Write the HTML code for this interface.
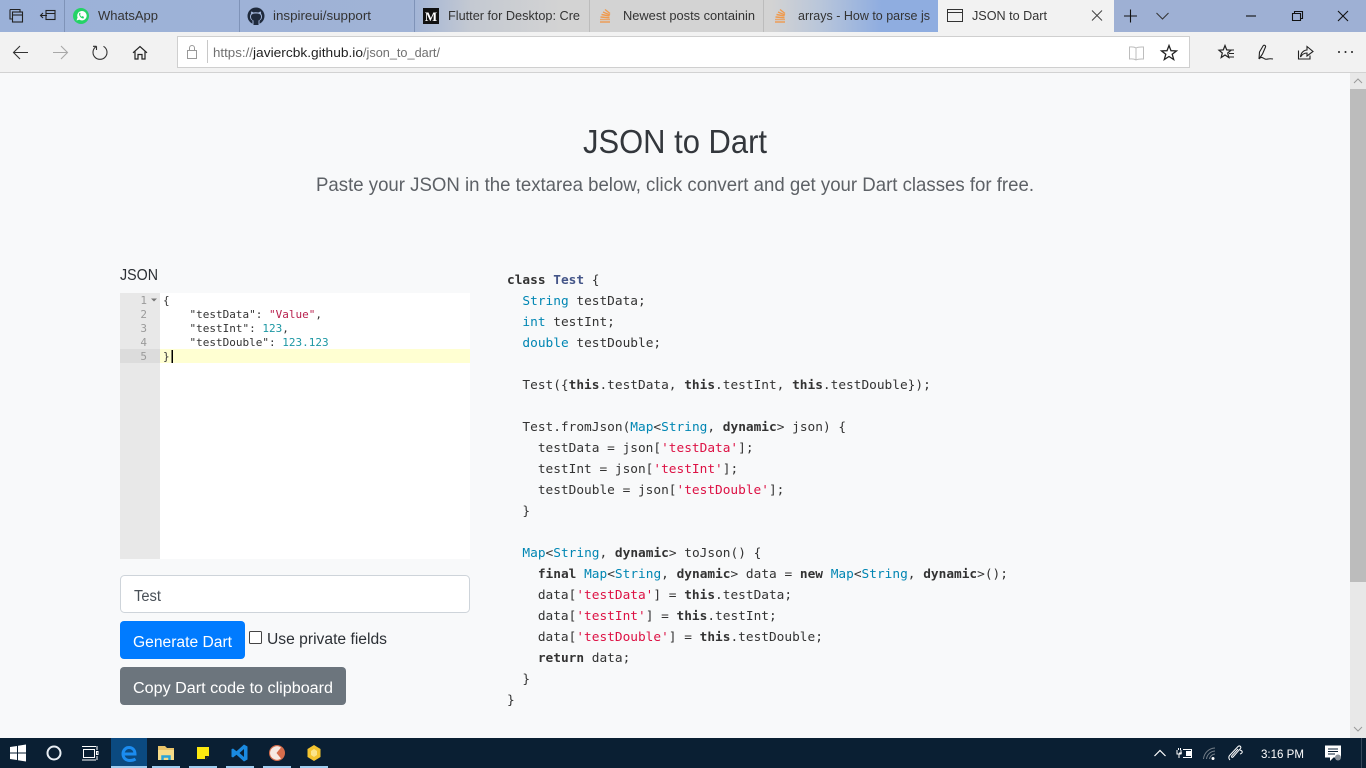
<!DOCTYPE html>
<html lang="en"><head><meta charset="utf-8"><title>JSON to Dart</title>
<style>
html,body{margin:0;padding:0;width:1366px;height:768px;overflow:hidden;background:#f8f9fa}
svg{display:block}
text{font-family:"Liberation Sans",sans-serif;white-space:pre}
.m{font-family:"DejaVu Sans Mono",monospace;font-size:12.8px;fill:#333}
.e{font-family:"DejaVu Sans Mono",monospace;font-size:11px;fill:#333}
.k{font-weight:bold}.t{fill:#0086b3}.s{fill:#d14}.c{fill:#445588;font-weight:bold}
.g{font-family:"DejaVu Sans Mono",monospace;font-size:11px;fill:#9a9a9a;text-anchor:end}
.tab{font-size:13px;fill:#333}
</style></head><body>
<svg width="1366" height="768" viewBox="0 0 1366 768" xmlns="http://www.w3.org/2000/svg">
<defs><linearGradient id="bar" x1="0" x2="1366" y1="0" y2="0" gradientUnits="userSpaceOnUse">
<stop offset="0" stop-color="#9bb1d8"/><stop offset=".3" stop-color="#a0b3d6"/><stop offset=".345" stop-color="#c4c9d2"/><stop offset=".41" stop-color="#d3d3d3"/><stop offset=".565" stop-color="#d3d3d3"/><stop offset=".6" stop-color="#b9c6da"/><stop offset=".645" stop-color="#8fade0"/><stop offset=".69" stop-color="#8fade0"/><stop offset=".82" stop-color="#9eb0d4"/><stop offset="1" stop-color="#9eb0d4"/></linearGradient></defs>
<rect width="1366" height="768" fill="#f8f9fa"/>
<!-- tab strip -->
<rect width="1366" height="32" fill="url(#bar)"/>
<g stroke="#7f93b8" stroke-width="1"><path d="M64.5 0V32M239.5 0V32M414.5 0V32"/></g>
<path d="M589.5 0V32M763.5 0V32" stroke="#bcbcbc"/>
<rect x="938" width="176" height="33" fill="#f2f2f2"/>
<!-- toolbar -->
<rect y="32" width="1366" height="40" fill="#f2f2f2"/>
<rect y="72" width="1366" height="1" fill="#d2d2d2"/>
<rect x="177.5" y="36.5" width="1012" height="31" fill="#fff" stroke="#cfcfcf"/>
<!-- left tab icons -->
<g fill="none" stroke="#222" stroke-width="1.1">
<path d="M10 9.5H20V12M10 9.5V19H12.500"/><rect x="12.500" y="12" width="10" height="10" fill="#9bb1d8"/><path d="M12.500 15H22.500"/>
<rect x="46" y="10.500" width="9" height="9"/><path d="M46 13.500H55M40.500 15.500H47M43 13L40.500 15.500L43 18"/>
</g>
<circle cx="81" cy="16" r="8" fill="#25d366"/><path d="M76.500 20.500L77.600 17.500A4.700 4.700 0 1 1 79.300 19.600Z" fill="#fff"/><path d="M79 13.500C79 16 81 18.500 83.500 18.500L84 17L82.500 16L81.800 16.800C81 16.300 80.300 15.500 80 14.800L80.600 14L80 12.600Z" fill="#25d366"/>
<circle cx="256" cy="16" r="8.500" fill="#1f2a3c"/><path d="M252.500 24V20.500C251 20 250 18.800 250 16.500C250 15.300 250.400 14.400 251 13.700C250.800 13 250.900 12.200 251.200 11.500C252 11.500 252.800 12 253.500 12.500C255 12.100 257 12.100 258.500 12.500C259.200 12 260 11.500 260.800 11.500C261.100 12.200 261.200 13 261 13.700C261.600 14.400 262 15.300 262 16.500C262 18.800 261 20 259.500 20.500V24Z" fill="#a0b3d6"/><path d="M253.500 25V20.500C252 20 251 18.800 251 16.500C251 14.300 253 13.500 256 13.500C259 13.500 261 14.300 261 16.500C261 18.800 260 20 258.500 20.500V25Z" fill="#1f2a3c"/>
<rect x="423" y="8" width="16" height="16" fill="#111"/>
<text x="431" y="21" style="font-family:'Liberation Serif',serif;font-weight:bold;font-size:13px;text-anchor:middle" fill="#fff">M</text>
<g fill="none" stroke="#ef9a4e" stroke-width="1.400">
<path d="M600 22H610"/><path d="M600 19.500L610 19.500" stroke="#e8a66b"/><path d="M600.500 17L609.500 17.800"/><path d="M601.500 14.500L609.500 16"/><path d="M603 12L610 15"/><path d="M605 9.500L610 13.500"/></g>
<g fill="none" stroke="#ef9a4e" stroke-width="1.400">
<path d="M775 22H785"/><path d="M775 19.500L785 19.500" stroke="#e8a66b"/><path d="M775.500 17L784.500 17.800"/><path d="M776.500 14.500L784.500 16"/><path d="M778 12L785 15"/><path d="M780 9.500L785 13.500"/></g>
<path d="M947.500 9.500H962.500V21.500H947.500ZM947.500 12.500H962.500" fill="none" stroke="#333" stroke-width="1"/>
<!-- tab text -->
<text class="tab" x="98" y="20" textLength="60" lengthAdjust="spacingAndGlyphs">WhatsApp</text>
<text class="tab" x="273" y="20" textLength="98" lengthAdjust="spacingAndGlyphs">inspireui/support</text>
<text class="tab" x="448" y="20" textLength="132" lengthAdjust="spacingAndGlyphs">Flutter for Desktop: Cre</text>
<text class="tab" x="623" y="20" textLength="132" lengthAdjust="spacingAndGlyphs">Newest posts containin</text>
<text class="tab" x="798" y="20" textLength="132" lengthAdjust="spacingAndGlyphs">arrays - How to parse js</text>
<text class="tab" x="972" y="20" textLength="75" lengthAdjust="spacingAndGlyphs">JSON to Dart</text>
<path d="M1092 10.500L1102 20.500M1102 10.500L1092 20.500" stroke="#444" stroke-width="1" fill="none"/>
<path d="M1130.500 9.500V22.500M1124 16H1137" stroke="#111" stroke-width="1.100" fill="none"/>
<path d="M1156.500 13L1162.500 19L1168.500 13" stroke="#333" stroke-width="1" fill="none"/>
<path d="M1246 16H1256" stroke="#111" stroke-width="1.100"/>
<path d="M1292.500 13.500H1300.500V20.500H1292.500ZM1294.500 13.500V11.500H1302.500V18.500H1300.500" fill="none" stroke="#111" stroke-width="1.100"/>
<path d="M1338 11L1348 21M1348 11L1338 21" stroke="#111" stroke-width="1.100" fill="none"/>
<!-- nav icons -->
<path d="M28 52.500H13.500M20 46L13.500 52.500L20 59" fill="none" stroke="#333" stroke-width="1.100"/>
<path d="M53 52.500H67.500M61 46L67.500 52.500L61 59" fill="none" stroke="#a8a8a8" stroke-width="1.100"/>
<path d="M103.500 46.300A7 7 0 1 1 96.500 46.300M96.500 46.300V50M96.500 46.300H93" fill="none" stroke="#333" stroke-width="1.100"/>
<path d="M133 52.800L140 46.500L147 52.800M135 51.500V59H138V54.500H142V59H145V51.500" fill="none" stroke="#222" stroke-width="1.200"/>
<path d="M187.500 50.500H196.500V58.500H187.500ZM189.500 50.500V48A2.500 2.500 0 0 1 194.500 48V50.500" fill="none" stroke="#999" stroke-width="1"/>
<path d="M207.500 40V63" stroke="#c8c8c8"/>
<!-- url -->
<text x="213" y="57" font-size="13" fill="#707070" textLength="40" lengthAdjust="spacingAndGlyphs">https://</text>
<text x="253" y="57" font-size="13" fill="#1f1f1f" textLength="110" lengthAdjust="spacingAndGlyphs">javiercbk.github.io</text>
<text x="363" y="57" font-size="13" fill="#707070" textLength="77" lengthAdjust="spacingAndGlyphs">/json_to_dart/</text>
<path d="M1136 48C1134 46.800 1132 46.800 1129.500 47V59C1132 58.800 1134 58.800 1136 60C1138 58.800 1140 58.800 1143.500 59V47C1140 46.800 1138 46.800 1136 48ZM1136 48V60" fill="none" stroke="#bdbdbd" stroke-width="1"/>
<path d="M1169 45.500L1171 50.700L1176.500 50.900L1172.200 54.300L1173.700 59.500L1169 56.500L1164.300 59.500L1165.800 54.300L1161.500 50.900L1167 50.700Z" fill="none" stroke="#222" stroke-width="1.300"/>
<path d="M1225 45.500L1226.700 49.900L1231 50.200L1227.700 53L1228.800 57.500L1225 55L1221.200 57.500L1222.300 53L1219 50.200L1223.300 49.900Z" fill="none" stroke="#222" stroke-width="1.200"/><path d="M1228 50H1234M1229 53.500H1234M1229 57H1234" stroke="#222" stroke-width="1"/>
<path d="M1259 59L1259.500 52L1263 46C1264 44.500 1266 45.500 1265.500 47L1262.500 54L1259 59C1261 56 1263 58 1265 59C1267 60 1268 58 1273 59" fill="none" stroke="#222" stroke-width="1.100"/>
<path d="M1298.500 50.500V59H1310V55.500M1300.500 57C1301 52 1304.500 50 1307 50V46.500L1313 51.500L1307 56V53C1304.500 53 1302 54.500 1300.500 57Z" fill="none" stroke="#222" stroke-width="1.100"/>
<g fill="#222"><circle cx="1339" cy="52" r="1"/><circle cx="1345.500" cy="52" r="1"/><circle cx="1352" cy="52" r="1"/></g>
<!-- heading -->
<text x="583" y="153" font-size="33" fill="#33373c" textLength="184" lengthAdjust="spacingAndGlyphs">JSON to Dart</text>
<text x="316" y="191" font-size="19.500" fill="#5d6166" textLength="718" lengthAdjust="spacingAndGlyphs">Paste your JSON in the textarea below, click convert and get your Dart classes for free.</text>
<text x="120" y="280" font-size="15.500" fill="#2c3035" textLength="38" lengthAdjust="spacingAndGlyphs">JSON</text>
<!-- editor -->
<rect x="120" y="293" width="350" height="266" fill="#fff"/>
<rect x="120" y="293" width="40" height="266" fill="#e8e8e8"/>
<rect x="120" y="349" width="40" height="14" fill="#dcdcdc"/>
<rect x="160" y="349" width="310" height="14" fill="#ffffd2"/>
<text class="g" x="147" y="304">1</text><text class="g" x="147" y="318">2</text><text class="g" x="147" y="332">3</text><text class="g" x="147" y="346">4</text><text class="g" x="147" y="360">5</text>
<path d="M151 298.500H157L154 301.500Z" fill="#777"/>
<text class="e" x="163" y="304">{</text>
<text class="e" x="163" y="318">    "testData": <tspan fill="#b8214e">"Value"</tspan>,</text>
<text class="e" x="163" y="332">    "testInt": <tspan fill="#1c97a3">123</tspan>,</text>
<text class="e" x="163" y="346">    "testDouble": <tspan fill="#1c97a3">123.123</tspan></text>
<text class="e" x="163" y="360">}</text>
<rect x="171.500" y="350" width="1.500" height="13" fill="#000"/>
<!-- form -->
<rect x="120.500" y="575.500" width="349" height="37" rx="4" fill="#fff" stroke="#ced4da"/>
<text x="134" y="601" font-size="15.500" fill="#495057" textLength="27" lengthAdjust="spacingAndGlyphs">Test</text>
<rect x="120" y="621" width="125" height="38" rx="4" fill="#007bff"/>
<text x="133" y="647" font-size="15.500" fill="#fff" textLength="99" lengthAdjust="spacingAndGlyphs">Generate Dart</text>
<rect x="249.500" y="631.500" width="12" height="12" rx="1" fill="#fff" stroke="#444"/>
<text x="267" y="644" font-size="15.500" fill="#2c3035" textLength="120" lengthAdjust="spacingAndGlyphs">Use private fields</text>
<rect x="120" y="667" width="226" height="38" rx="4" fill="#6c757d"/>
<text x="133" y="693" font-size="15.500" fill="#fff" textLength="200" lengthAdjust="spacingAndGlyphs">Copy Dart code to clipboard</text>
<!-- code -->
<text class="m" x="507" y="284"><tspan class="k">class</tspan> <tspan class="c">Test</tspan> {</text>
<text class="m" x="507" y="305">  <tspan class="t">String</tspan> testData;</text>
<text class="m" x="507" y="326">  <tspan class="t">int</tspan> testInt;</text>
<text class="m" x="507" y="347">  <tspan class="t">double</tspan> testDouble;</text>
<text class="m" x="507" y="389">  Test({<tspan class="k">this</tspan>.testData, <tspan class="k">this</tspan>.testInt, <tspan class="k">this</tspan>.testDouble});</text>
<text class="m" x="507" y="431">  Test.fromJson(<tspan class="t">Map</tspan>&lt;<tspan class="t">String</tspan>, <tspan class="k">dynamic</tspan>&gt; json) {</text>
<text class="m" x="507" y="452">    testData = json[<tspan class="s">'testData'</tspan>];</text>
<text class="m" x="507" y="473">    testInt = json[<tspan class="s">'testInt'</tspan>];</text>
<text class="m" x="507" y="494">    testDouble = json[<tspan class="s">'testDouble'</tspan>];</text>
<text class="m" x="507" y="515">  }</text>
<text class="m" x="507" y="557">  <tspan class="t">Map</tspan>&lt;<tspan class="t">String</tspan>, <tspan class="k">dynamic</tspan>&gt; toJson() {</text>
<text class="m" x="507" y="578">    <tspan class="k">final</tspan> <tspan class="t">Map</tspan>&lt;<tspan class="t">String</tspan>, <tspan class="k">dynamic</tspan>&gt; data = <tspan class="k">new</tspan> <tspan class="t">Map</tspan>&lt;<tspan class="t">String</tspan>, <tspan class="k">dynamic</tspan>&gt;();</text>
<text class="m" x="507" y="599">    data[<tspan class="s">'testData'</tspan>] = <tspan class="k">this</tspan>.testData;</text>
<text class="m" x="507" y="620">    data[<tspan class="s">'testInt'</tspan>] = <tspan class="k">this</tspan>.testInt;</text>
<text class="m" x="507" y="641">    data[<tspan class="s">'testDouble'</tspan>] = <tspan class="k">this</tspan>.testDouble;</text>
<text class="m" x="507" y="662">    <tspan class="k">return</tspan> data;</text>
<text class="m" x="507" y="683">  }</text>
<text class="m" x="507" y="704">}</text>
<!-- scrollbar -->
<rect x="1350" y="73" width="16" height="665" fill="#e8e8e8"/>
<rect x="1350" y="89" width="16" height="493" fill="#bcbcbc"/>
<path d="M1354 83L1358 79L1362 83" fill="none" stroke="#9a9a9a"/>
<path d="M1354 727L1358 731L1362 727" fill="none" stroke="#9a9a9a"/>
<!-- taskbar -->
<rect y="738" width="1366" height="30" fill="#0a1f33"/>
<rect x="111" y="738" width="36" height="30" fill="#0b4a80"/>
<g fill="#9fcdf0"><rect x="111" y="766" width="36" height="2"/><rect x="152" y="766" width="28" height="2"/><rect x="189" y="766" width="28" height="2"/><rect x="226" y="766" width="28" height="2"/><rect x="263" y="766" width="28" height="2"/><rect x="300" y="766" width="28" height="2"/></g>
<path d="M10 747L17 746V752.500H10ZM18 745.800L26 744.500V752.500H18ZM10 753.500H17V760L10 759ZM18 753.500H26V761.500L18 760.200Z" fill="#fff"/>
<circle cx="54" cy="753" r="6.500" fill="none" stroke="#e8eef4" stroke-width="2"/>
<path d="M83.500 749.500H94.500V757.500H83.500ZM82 746.500H96M82 760H96" fill="none" stroke="#fff" stroke-width="1"/><path d="M97 746V750M96.500 751.500H98V754.500H96.500ZM97 756V760" fill="none" stroke="#fff"/>
<path d="M123 754H135C135 749.500 132 747.500 129 747.500C125.500 747.500 123 750.500 123 754C123 758 126 760.500 129.500 760.500C132 760.500 134 760 135.500 759" fill="none" stroke="#1b8cf0" stroke-width="3"/>
<path d="M158 746H165L167 748H174V752H158Z" fill="#e9c46a"/><rect x="158" y="750" width="16" height="10" fill="#f6dc8a"/><path d="M162.500 760V756.500H169.500V760" fill="none" stroke="#2aa3d8" stroke-width="2.500"/>
<path d="M197 747H209V756L206 759H197Z" fill="#fde910"/><path d="M209 756H205V760Z" fill="#222"/>
<path d="M244 744.500L247.500 746.500V759.500L244 761.500L236.500 754.700L233 757.500L231.500 756.700V749.300L233 748.500L236.500 751.300ZM244 749L239.500 753L244 757Z" fill="#1a8ae0"/>
<circle cx="277" cy="753" r="8" fill="#d66d4c"/><path d="M270 753A7 7 0 0 1 281 747.500L276.500 753L281 758.500A7 7 0 0 1 270 753Z" fill="#f6e9e2"/>
<path d="M314 745L320.500 749V757L314 761L307.500 757V749Z" fill="#f4c430"/><path d="M314 749L317 751V755L314 757L311 755V751Z" fill="#fbe48a"/>
<!-- tray -->
<path d="M1154.500 756L1160 750.500L1165.500 756" fill="none" stroke="#fff" stroke-width="1.200"/>
<path d="M1179 753H1182M1177 750V754H1181V750M1178.500 748V750M1180.500 748V750M1179 754V758" fill="none" stroke="#fff"/>
<path d="M1183 749.500H1191.500V757.500H1183" fill="none" stroke="#fff"/><rect x="1186" y="751" width="5" height="5" fill="#fff"/>
<g fill="none" stroke="#76808a"><path d="M1203.500 759A12 12 0 0 1 1215 748"/><path d="M1206.500 759A9 9 0 0 1 1215 751"/><path d="M1209.500 759A6 6 0 0 1 1215 754"/></g><circle cx="1213" cy="758.500" r="1.500" fill="#fff"/>
<path d="M1230 760C1228 758 1229 756 1230 755L1238 746.500C1240 745 1241.500 747 1240.500 748.500L1233 757C1232 758 1231 757 1232 755.500L1238 749M1240 750C1243 751 1243 753 1240 754" fill="none" stroke="#fff" stroke-width="1"/>
<text x="1261" y="758" font-size="12" fill="#fff" textLength="43" lengthAdjust="spacingAndGlyphs">3:16 PM</text>
<path d="M1325 745.500H1341V757.500H1333.500L1330 761V757.500H1325Z" fill="#fff"/><path d="M1328 749H1338M1328 751.500H1338M1328 754H1335" stroke="#0a1f33"/>
<circle cx="1338" cy="757.500" r="3" fill="#8a939b"/>
<rect x="1361" y="738" width="1" height="30" fill="#35475a"/>
</svg>
</body></html>
